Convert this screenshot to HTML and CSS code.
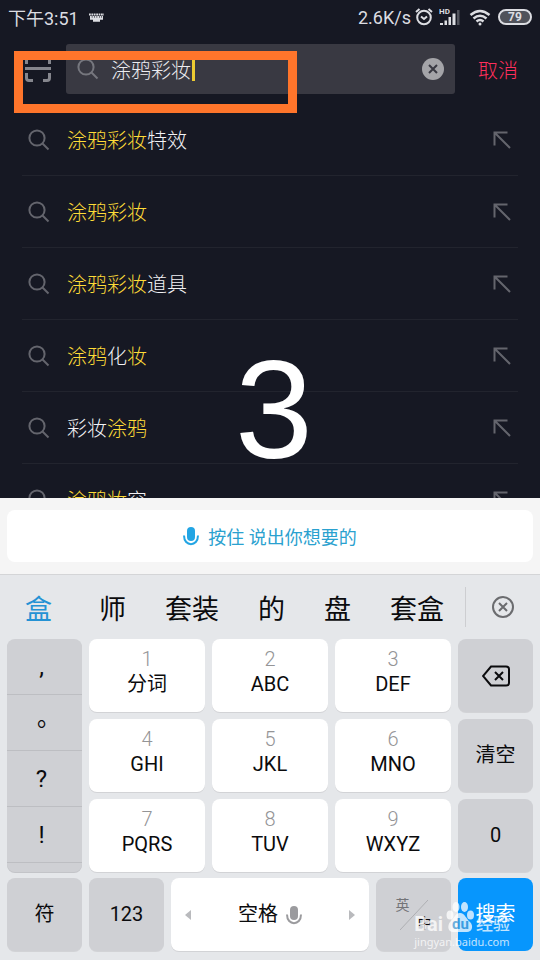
FILE: index.html
```html
<!DOCTYPE html>
<html lang="zh-CN">
<head>
<meta charset="utf-8">
<meta name="viewport" content="width=device-width, initial-scale=1">
<title>搜索</title>
<link rel="stylesheet" href="styles.css">
</head>
<body>
<svg class="defs" aria-hidden="true">
  <symbol id="search" viewBox="0 0 22 22"><circle cx="9" cy="9" r="7.6"/><path d="M14.5 14.5L20.5 20.5"/></symbol>
  <symbol id="fill" viewBox="0 0 18 18"><path d="M1.500 14.500V1.500H14.500M1.500 1.500L17 17"/></symbol>
  <symbol id="mic" viewBox="0 0 16 20"><rect class="solid" x="4" y="1" width="8" height="14" rx="4"/><path d="M1 9.500C1 21 15 21 15 9.500"/></symbol>
</svg>
<div class="phone">
  <header class="status">
    <span>下午3:51</span>
    <svg class="kbd" width="15" height="9" viewBox="0 0 15 9"><path d="M0 1.500H15M1 4H14" stroke-dasharray="1.800 .6"/><path d="M1 5.800H14M4 7.700H11"/></svg>
    <span class="speed">2.6K/s</span>
    <svg class="line" width="18" height="18" viewBox="0 0 18 18"><circle cx="9" cy="9.500" r="6.800"/><path d="M1 4L4.500 1M17 4L13.500 1M6 8.500L9 11L12 8.500"/></svg>
    <svg class="signal" width="22" height="18" viewBox="0 0 22 18"><text x="0" y="6">HD</text><path d="M1 17V15H4V17ZM5.500 17V12.500H8V17ZM9.500 17V9H12V17ZM13.500 17V5.500H16.500V17Z"/><path class="weak" d="M18 17V2H20.500V17Z"/></svg>
    <svg class="wifi" width="22" height="17" viewBox="0 0 22 17"><path d="M1.500 6Q11-2 20.500 6M4.500 9.500Q11 4 17.500 9.500M7.500 12.500Q11 9.500 14.500 12.500"/><circle cx="11" cy="15" r="1.500"/></svg>
    <span class="battery">79</span>
  </header>

  <form class="searchbar">
    <button type="button" class="scan" aria-label="扫一扫"><svg width="28" height="28" viewBox="0 0 28 28"><path d="M2.500 9V4Q2.500 2 5 2H9M19 2H23Q25.500 2 25.500 4V9M2.500 18V23Q2.500 25.500 5 25.500H9M19 25.500H23Q25.500 25.500 25.500 23V18M1 13.500H27"/></svg></button>
    <div class="field">
      <svg class="icon" width="22" height="22"><use href="#search"/></svg>
      <input type="text" value="涂鸦彩妆" aria-label="搜索内容"><i class="caret"></i>
      <button type="reset" class="clear" aria-label="清除"><svg width="22" height="22" viewBox="0 0 22 22"><circle cx="11" cy="11" r="11"/><path d="M7 7L15 15M15 7L7 15"/></svg></button>
    </div>
    <button type="button" class="cancel">取消</button>
    <div class="highlight"></div>
  </form>

  <main class="results">
    <ul>
      <li><svg class="icon" width="22" height="22"><use href="#search"/></svg><a href="#"><em>涂鸦彩妆</em>特效</a><svg class="icon" width="18" height="18"><use href="#fill"/></svg></li>
      <li><svg class="icon" width="22" height="22"><use href="#search"/></svg><a href="#"><em>涂鸦彩妆</em></a><svg class="icon" width="18" height="18"><use href="#fill"/></svg></li>
      <li><svg class="icon" width="22" height="22"><use href="#search"/></svg><a href="#"><em>涂鸦彩妆</em>道具</a><svg class="icon" width="18" height="18"><use href="#fill"/></svg></li>
      <li><svg class="icon" width="22" height="22"><use href="#search"/></svg><a href="#"><em>涂鸦</em>化<em>妆</em></a><svg class="icon" width="18" height="18"><use href="#fill"/></svg></li>
      <li><svg class="icon" width="22" height="22"><use href="#search"/></svg><a href="#">彩妆<em>涂鸦</em></a><svg class="icon" width="18" height="18"><use href="#fill"/></svg></li>
      <li><svg class="icon" width="22" height="22"><use href="#search"/></svg><a href="#"><em>涂鸦妆</em>容</a><svg class="icon" width="18" height="18"><use href="#fill"/></svg></li>
    </ul>
    <div class="step">3</div>
  </main>

  <section class="voice">
    <button type="button"><svg class="mic" width="16" height="20"><use href="#mic"/></svg>按住 说出你想要的</button>
  </section>

  <section class="keyboard">
    <div class="candidates">
      <div class="words">
        <button type="button" class="active">盒</button><button type="button">师</button><button type="button">套装</button><button type="button">的</button><button type="button">盘</button><button type="button">套盒</button>
      </div>
      <button type="button" class="dismiss" aria-label="关闭"><svg width="22" height="22" viewBox="0 0 22 22"><circle cx="11" cy="11" r="10"/><path d="M7 7L15 15M15 7L7 15"/></svg></button>
    </div>
    <div class="keys">
      <div class="punct"><button type="button">,</button><button type="button" lang="zh-TW">。</button><button type="button">?</button><button type="button">!</button></div>
      <button type="button" class="key"><small>1</small>分词</button>
      <button type="button" class="key"><small>2</small>ABC</button>
      <button type="button" class="key"><small>3</small>DEF</button>
      <button type="button" class="key gray" aria-label="删除"><svg class="del" width="28" height="22" viewBox="0 0 28 22"><path d="M9 1.500H24Q27 1.500 27 4V18Q27 20.500 24 20.500H9L1 11ZM13 7L21 15M21 7L13 15"/></svg></button>
      <button type="button" class="key"><small>4</small>GHI</button>
      <button type="button" class="key"><small>5</small>JKL</button>
      <button type="button" class="key"><small>6</small>MNO</button>
      <button type="button" class="key gray">清空</button>
      <button type="button" class="key"><small>7</small>PQRS</button>
      <button type="button" class="key"><small>8</small>TUV</button>
      <button type="button" class="key"><small>9</small>WXYZ</button>
      <button type="button" class="key gray">0</button>
    </div>
    <div class="bottom">
      <button type="button" class="key gray">符</button>
      <button type="button" class="key gray">123</button>
      <button type="button" class="key space"><svg width="6" height="10" viewBox="0 0 6 10"><path d="M6 0V10L0 5Z"/></svg><span>空格<svg class="mic" width="16" height="20"><use href="#mic"/></svg></span><svg width="6" height="10" viewBox="0 0 6 10"><path d="M0 0V10L6 5Z"/></svg></button>
      <button type="button" class="key gray lang"><span class="en">英</span><svg width="28" height="30" viewBox="0 0 28 30"><path d="M0 30L28 0"/></svg><span class="zh">中</span></button>
      <button type="button" class="key go">搜索</button>
    </div>
  </section>

  <div class="watermark">
    <div class="brand"><b>Bai</b><span class="paw"><svg width="28" height="30" viewBox="0 0 28 30"><ellipse cx="4" cy="13" rx="3.500" ry="4.500"/><ellipse cx="10" cy="5" rx="3.500" ry="5"/><ellipse cx="18.500" cy="5" rx="3.500" ry="5"/><ellipse cx="24.500" cy="13" rx="3.500" ry="4.500"/><path d="M14 11C19 11 20 17 24 20C28 24 26 30 21 30H7C2 30 1 24 4 20C8 17 9 11 14 11Z"/></svg><b>du</b></span><b class="cn">经验</b></div>
    <div class="url">jingyan.baidu.com</div>
  </div>
</div>
</body>
</html>
```
FILE: styles.css
```css
* { box-sizing: border-box; }
body {
  margin: 0;
  background: #161823;
  color: #e6e6ea;
  font-family: Roboto, "Noto Sans CJK SC", sans-serif;
  font-size: 20px;
}
button, input { font: inherit; color: inherit; border: 0; padding: 0; background: none; }
svg { flex: none; fill: none; stroke: currentColor; }
.defs { position: absolute; width: 0; height: 0; }
.phone { position: relative; display: flex; flex-direction: column; height: 100vh; overflow: hidden; }

.status { display: flex; align-items: center; height: 34px; padding: 0 8px; font-size: 18px; color: #dcdde2; }
.kbd { margin-left: 10px; stroke-width: 2; }
.speed { margin-left: auto; margin-right: 4px; }
.line { stroke-width: 2; }
.signal { margin-left: 6px; fill: currentColor; stroke: none; font-size: 8px; font-weight: 700; }
.weak { opacity: .3; }
.wifi { margin-left: 8px; stroke-width: 2.5; }
.wifi circle { fill: currentColor; stroke: none; }
.battery {
  display: flex; align-items: center; justify-content: center;
  width: 34px; height: 16px; margin-left: 7px;
  border: 2px solid; border-radius: 8px;
  background: #50525a; background-clip: padding-box; font-size: 12px; font-weight: 700;
}

.searchbar { position: relative; display: flex; align-items: center; flex: none; height: 50px; margin: 10px 22px 0 24px; font-weight: 300; }
.scan { display: flex; margin-right: 14px; color: #85868d; }
.scan svg { stroke-width: 3; }
.field { flex: 1; display: flex; align-items: center; height: 50px; padding: 0 11px; border-radius: 3px; background: #393942; }
.icon { color: #64656d; stroke-width: 2; }
.field .icon { color: #76777e; }
.field input { width: 81px; height: 28px; margin-left: 12px; outline: 0; color: #ececf0; }
.caret { width: 3px; height: 24px; background: #eccb32; }
.clear { display: flex; margin-left: auto; }
.clear circle { fill: #a4a4a8; stroke: none; }
.clear path { stroke: #393942; stroke-width: 2; }
.cancel { margin-left: 23px; color: #ff2f5c; }
.highlight { position: absolute; left: -10px; top: 7px; width: 283px; height: 62px; border: 9px solid #ff752b; }

.results { position: relative; flex: 1 1 0; min-height: 0; overflow: hidden; }
.results ul { margin: 10px 22px 0; padding: 0; list-style: none; font-weight: 300; }
.results li { display: flex; align-items: center; height: 72px; padding: 0 7px 0 6px; border-bottom: 1px solid #22242e; }
.results a { flex: 1; margin-left: 17px; color: #f2f2f5; text-decoration: none; }
.results em { font-style: normal; color: #ffdc38; }
.step { position: absolute; left: 235px; top: 246px; color: #fff; font: 140px/1 "Liberation Sans", sans-serif; }

.voice { flex: none; padding: 12px 7px; background: #f5f5f5; }
.voice button {
  display: flex; align-items: center; justify-content: center; gap: 9px;
  width: 100%; height: 52px; border-radius: 8px; background: #fff;
  color: #2aa1cf; font-size: 18px;
}
.mic { stroke-width: 2; }
.mic, .solid { color: inherit; }
.solid { fill: currentColor; stroke: none; }
.voice .mic { color: #22a5e4; }

.keyboard { flex: none; padding: 0 7px 9px; border-top: 1px solid #d4d5d7; background: #e5e7ea; color: #0b0b0d; }
.candidates { display: flex; align-items: center; height: 64px; }
.words { flex: 1; display: flex; justify-content: space-between; padding: 0 21px 0 18px; font-size: 27px; }
.words .active { margin-right: 8px; color: #2492d4; }
.dismiss { display: flex; align-items: center; justify-content: center; width: 68px; height: 40px; padding-left: 6px; border-left: 1px solid #cdced1; color: #6b6c6f; }
.dismiss svg { stroke-width: 2; }

.keys, .bottom { display: grid; gap: 7px; grid-auto-rows: 73px; }
.keys { grid-template-columns: 75fr 116fr 116fr 116fr 75fr; }
.bottom { grid-template-columns: 75fr 75fr 198fr 75fr 75fr; margin-top: 6px; }
.key {
  display: flex; flex-direction: column; align-items: center; justify-content: center;
  min-width: 0; border-radius: 8px; background: #fff;
  box-shadow: 0 1px 0 #d2d3d6; line-height: 25px;
}
.keys .key:not(.gray) { padding-bottom: 7px; }
.key small { color: #949496; font-size: 20px; font-weight: 300; }
.key.gray, .punct { background: #cfd0d4; }
.punct { grid-row: span 3; display: flex; flex-direction: column; border-radius: 8px; box-shadow: 0 1px 0 #c3c4c8; font-size: 24px; }
.punct button { height: 56px; padding-right: 6px; border-bottom: 1px solid #bdbec2; }
.punct button:lang(zh-TW) { font-family: "Noto Sans CJK TC", sans-serif; }
.del { stroke-width: 2; }
.space { flex-direction: row; justify-content: space-between; padding: 0 14px; }
.space > svg { fill: #b9babd; stroke: none; }
.space span { display: flex; align-items: center; gap: 8px; }
.space .mic { color: #9b9b9e; }
.lang { flex-direction: row; align-items: center; font-size: 14px; }
.lang svg { margin: 0 -10px; color: #aeafb3; }
.lang .en { align-self: flex-start; padding-top: 15px; color: #737478; }
.lang .zh { align-self: flex-end; padding-bottom: 15px; }
.key.go { background: #0796fd; color: #fff; box-shadow: none; }

.watermark { position: absolute; right: 30px; bottom: 10px; color: #fff; opacity: .75; pointer-events: none; }
.brand { display: flex; align-items: flex-end; justify-content: flex-end; font-size: 20px; line-height: 20px; }
.paw { position: relative; display: flex; margin: 0 2px 2px 3px; }
.paw svg { fill: currentColor; stroke: none; }
.paw b { position: absolute; left: 6px; bottom: -2px; color: #4a9ed8; font-size: 15px; }
.brand .cn { font-size: 17px; font-weight: 500; }
.url { font: 11px/16px "Noto Sans", sans-serif; white-space: nowrap; }
```
